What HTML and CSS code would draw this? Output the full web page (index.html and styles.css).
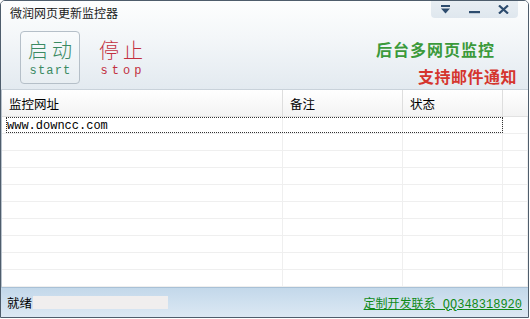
FILE: index.html
```html
<!DOCTYPE html>
<html lang="zh-CN">
<head>
  <meta charset="UTF-8">
  <title>微润网页更新监控器</title>
  <link rel="stylesheet" href="styles.css">
</head>
<body>
  <div class="window">
    <div class="header">
      <div class="titlebar">
        <span class="title">微润网页更新监控器</span>
        <div class="controls">
          <span class="ctl">
            <svg width="11" height="9" viewBox="0 0 11 9"><rect x="1" y="0" width="9" height="2" fill="#2d4c6e"/><path d="M1 3.5 H10 L5.5 8.5 Z" fill="#2d4c6e"/></svg>
          </span>
          <span class="ctl">
            <svg width="11" height="9" viewBox="0 0 11 9"><rect x="0" y="6" width="11" height="2.2" fill="#2d4c6e"/></svg>
          </span>
          <span class="ctl">
            <svg width="11" height="9" viewBox="0 0 11 9"><path d="M1 0.5 L10 8.5 M10 0.5 L1 8.5" stroke="#2d4c6e" stroke-width="2.2"/></svg>
          </span>
        </div>
      </div>
      <div class="toolbar">
        <div class="tool tool-start">
          <span class="tool-cn">启动</span>
          <span class="tool-en">start</span>
        </div>
        <div class="tool tool-stop">
          <span class="tool-cn">停止</span>
          <span class="tool-en">stop</span>
        </div>
        <div class="promo">
          <span class="promo-green">后台多网页监控</span>
          <span class="promo-red">支持邮件通知</span>
        </div>
      </div>
    </div>

    <div class="table">
      <div class="thead">
        <div class="th c1">监控网址</div>
        <div class="th c2">备注</div>
        <div class="th c3">状态</div>
        <div class="th c4"></div>
      </div>
      <div class="rows" id="rows"></div>
    </div>

    <div class="statusbar">
      <span class="status-text">就绪</span>
      <span class="status-box"></span>
      <a class="status-link" href="#">定制开发联系 QQ348318920</a>
    </div>
  </div>

  <script>
    var urls = ["www.downcc.com"];
    var rows = document.getElementById("rows");
    for (var i = 0; i < 10; i++) {
      var row = document.createElement("div");
      row.className = "row" + (i === 0 ? " row-focus" : "");
      row.innerHTML =
        '<div class="td c1">' + (urls[i] || "") + '</div>' +
        '<div class="td c2"></div>' +
        '<div class="td c3"></div>' +
        '<div class="td c4"></div>';
      rows.appendChild(row);
    }
  </script>
</body>
</html>
```

FILE: styles.css
```css
body {
  margin: 0;
  background: #fff;
  font-family: "Noto Sans CJK SC", sans-serif;
  font-size: 12px;
  color: #000;
}
.window {
  box-sizing: border-box;
  width: 529px;
  height: 318px;
  border: 1px solid #4e5d6c;
  border-radius: 5px 5px 0 0;
  overflow: hidden;
  display: flex;
  flex-direction: column;
  background: #fff;
}
.header {
  height: 89px;
  border-bottom: 1px solid #c9d2da;
  background: linear-gradient(#fdfefe, #f4f7f9 40%, #e3eaf0);
}
.titlebar {
  height: 17px;
  display: flex;
  justify-content: space-between;
}
.title {
  padding-left: 9px;
  line-height: 24px;
  font-size: 12px;
  color: #1a1a1a;
}
.controls {
  width: 87px;
  height: 17px;
  margin-right: 10px;
  display: flex;
  justify-content: space-around;
  align-items: center;
  background: linear-gradient(#e8eef3, #dfe7ee);
  border-radius: 0 0 4px 4px;
}
.ctl {
  display: flex;
  width: 20px;
  justify-content: center;
}
.toolbar {
  display: flex;
  align-items: flex-start;
  padding: 13px 11px 0 19px;
}
.tool {
  box-sizing: border-box;
  width: 60px;
  height: 53px;
  display: flex;
  flex-direction: column;
  align-items: center;
  padding-top: 8px;
  border: 1px solid transparent;
}
.tool-start {
  border-color: #b5bfc8;
  border-radius: 4px;
  background: linear-gradient(#f9fbfc, #e8eef2);
}
.tool-stop {
  margin-left: 11px;
}
.tool-cn {
  font-family: "Noto Sans CJK SC", serif;
  font-size: 20px;
  line-height: 20px;
  font-weight: 300;
  letter-spacing: 4px;
  margin-left: 4px;
}
.tool-en {
  font-family: "Liberation Mono", monospace;
  font-size: 12px;
  line-height: 11px;
  margin-top: 6px;
}
.tool-start .tool-cn, .tool-start .tool-en {
  color: #3a8a62;
}
.tool-stop .tool-cn, .tool-stop .tool-en {
  color: #c2303f;
}
.tool-start .tool-en {
  letter-spacing: 1.2px;
  margin-left: 1px;
}
.tool-stop .tool-en {
  letter-spacing: 4px;
  margin-left: 4px;
}
.promo {
  margin-left: auto;
  display: flex;
  flex-direction: column;
  align-items: flex-end;
  font-weight: bold;
  font-size: 16px;
  line-height: 20px;
}
.promo-green {
  color: #3b9a3b;
  margin-top: 8px;
  margin-right: 22px;
  letter-spacing: 1px;
}
.promo-red {
  color: #d5352e;
  margin-top: 7px;
  letter-spacing: 0.5px;
}
.table {
  flex: 1;
  border-left: 1px solid #b8c2cc;
  display: flex;
  flex-direction: column;
}
.thead {
  display: flex;
  height: 26px;
  background: linear-gradient(#ffffff, #f3f3f3);
  border-bottom: 1px solid #e2e2e2;
}
.th {
  box-sizing: border-box;
  line-height: 28px;
  font-size: 12.5px;
  padding-left: 7px;
  border-right: 1px solid #dedede;
}
.c1 { width: 281px; }
.c2 { width: 120px; }
.c3 { width: 100px; }
.c4 { flex: 1; border-right: none; }
.rows {
  flex: 1;
  overflow: hidden;
}
.row {
  display: flex;
  height: 17px;
  border-bottom: 1px solid #efefef;
  box-sizing: border-box;
}
.td {
  box-sizing: border-box;
  border-right: 1px solid #efefef;
  font-family: "Liberation Mono", monospace;
  font-size: 12px;
  line-height: 19px;
  padding-left: 5px;
}
.row-focus {
  position: relative;
}
.row-focus::after {
  content: "";
  position: absolute;
  left: 4px;
  top: 0;
  width: 497px;
  height: 16px;
  box-sizing: border-box;
  border: 1px dotted #333;
}
.statusbar {
  height: 29px;
  display: flex;
  align-items: center;
  padding: 0 6px;
  background: linear-gradient(#c3d8ea, #d2e2f0 60%, #dce8f3);
  border-top: 1px solid #a9c1d6;
}
.status-text {
  width: 26px;
  font-size: 12.5px;
}
.status-box {
  width: 135px;
  height: 13px;
  background: #f0eeee;
}
.status-link {
  margin-left: auto;
  color: #108a18;
  font-size: 12px;
  font-family: "Liberation Mono", "Noto Sans CJK SC", monospace;
  text-decoration: underline;
}
```
